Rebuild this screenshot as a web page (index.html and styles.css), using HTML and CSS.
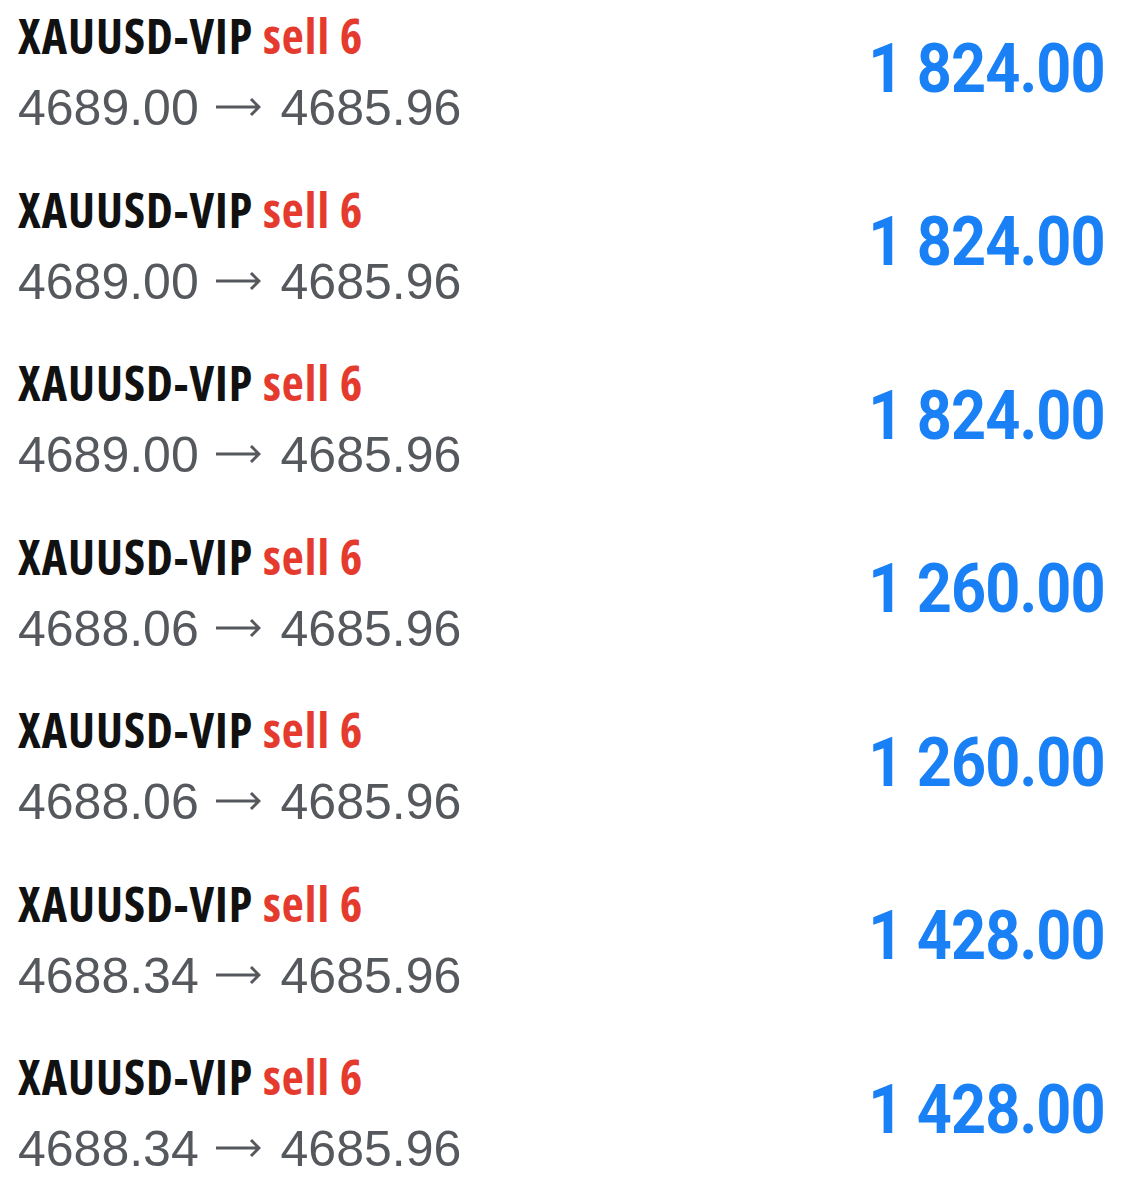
FILE: index.html
```html
<!DOCTYPE html>
<html lang="en">
<head>
    <meta charset="UTF-8">
    <meta name="viewport" content="width=device-width, initial-scale=1.0">
    <title>Closed Positions</title>
    <link rel="stylesheet" href="styles.css">
</head>
<body>
    <div class="trades">
        <div class="trade">
            <div class="info">
                <div class="symbol">XAUUSD-VIP <span class="side">sell 6</span></div>
                <div class="prices">4689.00 <svg class="arrow" viewBox="0 0 46 20"><path d="M1 10H44M36 2l8 8-8 8"/></svg> 4685.96</div>
            </div>
            <div class="profit">1 824.00</div>
        </div>
        <div class="trade">
            <div class="info">
                <div class="symbol">XAUUSD-VIP <span class="side">sell 6</span></div>
                <div class="prices">4689.00 <svg class="arrow" viewBox="0 0 46 20"><path d="M1 10H44M36 2l8 8-8 8"/></svg> 4685.96</div>
            </div>
            <div class="profit">1 824.00</div>
        </div>
        <div class="trade">
            <div class="info">
                <div class="symbol">XAUUSD-VIP <span class="side">sell 6</span></div>
                <div class="prices">4689.00 <svg class="arrow" viewBox="0 0 46 20"><path d="M1 10H44M36 2l8 8-8 8"/></svg> 4685.96</div>
            </div>
            <div class="profit">1 824.00</div>
        </div>
        <div class="trade">
            <div class="info">
                <div class="symbol">XAUUSD-VIP <span class="side">sell 6</span></div>
                <div class="prices">4688.06 <svg class="arrow" viewBox="0 0 46 20"><path d="M1 10H44M36 2l8 8-8 8"/></svg> 4685.96</div>
            </div>
            <div class="profit">1 260.00</div>
        </div>
        <div class="trade">
            <div class="info">
                <div class="symbol">XAUUSD-VIP <span class="side">sell 6</span></div>
                <div class="prices">4688.06 <svg class="arrow" viewBox="0 0 46 20"><path d="M1 10H44M36 2l8 8-8 8"/></svg> 4685.96</div>
            </div>
            <div class="profit">1 260.00</div>
        </div>
        <div class="trade">
            <div class="info">
                <div class="symbol">XAUUSD-VIP <span class="side">sell 6</span></div>
                <div class="prices">4688.34 <svg class="arrow" viewBox="0 0 46 20"><path d="M1 10H44M36 2l8 8-8 8"/></svg> 4685.96</div>
            </div>
            <div class="profit">1 428.00</div>
        </div>
        <div class="trade">
            <div class="info">
                <div class="symbol">XAUUSD-VIP <span class="side">sell 6</span></div>
                <div class="prices">4688.34 <svg class="arrow" viewBox="0 0 46 20"><path d="M1 10H44M36 2l8 8-8 8"/></svg> 4685.96</div>
            </div>
            <div class="profit">1 428.00</div>
        </div>
    </div>
</body>
</html>
```

FILE: styles.css
```css
body {
    margin: 0;
    background: #fff;
    font-family: 'Liberation Sans', Arial, sans-serif;
}
.trades {
    display: flex;
    flex-direction: column;
}
.trade {
    display: flex;
    justify-content: space-between;
    align-items: center;
    height: 173.5px;
    box-sizing: border-box;
    padding: 8px 20px 35.5px 18px;
}
.symbol {
    font-family: 'Open Sans', sans-serif;
    font-stretch: 87.5%;
    font-weight: 700;
    font-size: 48px;
    line-height: 56px;
    letter-spacing: 1px;
    color: #111;
    white-space: nowrap;
}
.side {
    color: #e53b2f;
}
.prices {
    margin-top: 14px;
    font-size: 50px;
    line-height: 60px;
    color: #55585d;
    white-space: nowrap;
}
.arrow {
    width: 46px;
    height: 20px;
    margin: 0 6px 0 2px;
    vertical-align: 8px;
    fill: none;
    stroke: #55585d;
    stroke-width: 3;
}
.profit {
    font-family: Roboto, sans-serif;
    font-weight: bold;
    font-size: 68px;
    line-height: 68px;
    letter-spacing: -1px;
    margin-right: -1px;
    margin-bottom: 9px;
    color: #1a80f6;
    white-space: nowrap;
    transform: scaleX(0.9);
    transform-origin: right center;
}
```
